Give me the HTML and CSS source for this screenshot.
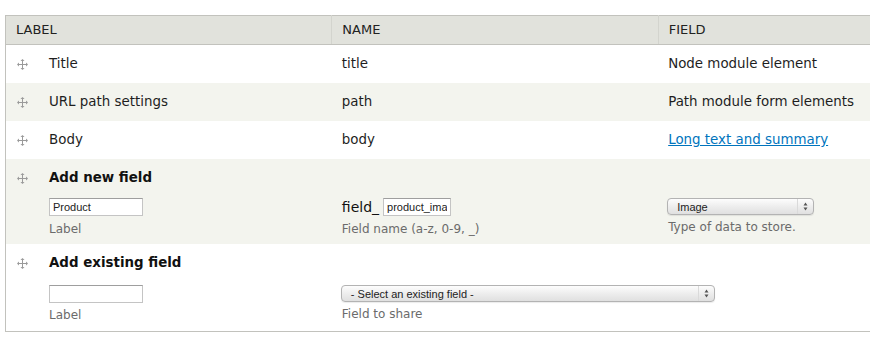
FILE: index.html
```html
<!DOCTYPE html>
<html lang="en">
<head>
    <meta charset="UTF-8">
    <title>Manage fields</title>
    <link rel="stylesheet" href="styles.css">
</head>
<body>
    <div class="page">
        <table class="field-table">
            <colgroup>
                <col class="col">
                <col class="col">
                <col class="col">
            </colgroup>
            <thead>
                <tr>
                    <th>LABEL</th>
                    <th>NAME</th>
                    <th>FIELD</th>
                </tr>
            </thead>
            <tbody>
                <tr>
                    <td><span class="handle"><svg width="11" height="11" viewBox="0 0 11 11"><path d="M5.5 1v9M1 5.5h9" stroke="#9a9a9a" stroke-width="1"/><path d="M5.5 0l2 2h-4zM5.5 11l2-2h-4zM0 5.5l2-2v4zM11 5.5l-2-2v4z" fill="#9a9a9a"/></svg></span>Title</td>
                    <td>title</td>
                    <td>Node module element</td>
                </tr>
                <tr class="even">
                    <td><span class="handle"><svg width="11" height="11" viewBox="0 0 11 11"><path d="M5.5 1v9M1 5.5h9" stroke="#9a9a9a" stroke-width="1"/><path d="M5.5 0l2 2h-4zM5.5 11l2-2h-4zM0 5.5l2-2v4zM11 5.5l-2-2v4z" fill="#9a9a9a"/></svg></span>URL path settings</td>
                    <td>path</td>
                    <td>Path module form elements</td>
                </tr>
                <tr>
                    <td><span class="handle"><svg width="11" height="11" viewBox="0 0 11 11"><path d="M5.5 1v9M1 5.5h9" stroke="#9a9a9a" stroke-width="1"/><path d="M5.5 0l2 2h-4zM5.5 11l2-2h-4zM0 5.5l2-2v4zM11 5.5l-2-2v4z" fill="#9a9a9a"/></svg></span>Body</td>
                    <td>body</td>
                    <td><a href="#" class="link">Long text and summary</a></td>
                </tr>
                <tr class="even add-row">
                    <td>
                        <div class="add-title"><span class="handle"><svg width="11" height="11" viewBox="0 0 11 11"><path d="M5.5 1v9M1 5.5h9" stroke="#9a9a9a" stroke-width="1"/><path d="M5.5 0l2 2h-4zM5.5 11l2-2h-4zM0 5.5l2-2v4zM11 5.5l-2-2v4z" fill="#9a9a9a"/></svg></span>Add new field</div>
                        <div class="form-item indent">
                            <input class="text-input" type="text" value="Product">
                            <div class="description">Label</div>
                        </div>
                    </td>
                    <td>
                        <div class="add-title">&nbsp;</div>
                        <div class="form-item">
                            <div class="prefix-line"><span class="prefix">field_</span><input class="text-input short" type="text" value="product_ima"></div>
                            <div class="description">Field name (a-z, 0-9, _)</div>
                        </div>
                    </td>
                    <td>
                        <div class="add-title">&nbsp;</div>
                        <div class="form-item">
                            <div class="select-box small"><span class="select-text">Image</span><span class="select-arrows"><svg width="5" height="9" viewBox="0 0 5 9"><path d="M2.5 0.5l2 3h-4zM2.5 8.5l2-3h-4z" fill="#555"/></svg></span></div>
                            <div class="description">Type of data to store.</div>
                        </div>
                    </td>
                </tr>
                <tr class="add-row last">
                    <td>
                        <div class="add-title"><span class="handle"><svg width="11" height="11" viewBox="0 0 11 11"><path d="M5.5 1v9M1 5.5h9" stroke="#9a9a9a" stroke-width="1"/><path d="M5.5 0l2 2h-4zM5.5 11l2-2h-4zM0 5.5l2-2v4zM11 5.5l-2-2v4z" fill="#9a9a9a"/></svg></span>Add existing field</div>
                        <div class="form-item indent">
                            <input class="text-input" type="text" value="">
                            <div class="description">Label</div>
                        </div>
                    </td>
                    <td>
                        <div class="add-title">&nbsp;</div>
                        <div class="form-item">
                            <div class="select-box wide"><span class="select-text">- Select an existing field -</span><span class="select-arrows"><svg width="5" height="9" viewBox="0 0 5 9"><path d="M2.5 0.5l2 3h-4zM2.5 8.5l2-3h-4z" fill="#555"/></svg></span></div>
                            <div class="description">Field to share</div>
                        </div>
                    </td>
                    <td></td>
                </tr>
            </tbody>
        </table>
    </div>
</body>
</html>
```

FILE: styles.css
```css
* {
    margin: 0;
    padding: 0;
    box-sizing: border-box;
}

body {
    font-family: "DejaVu Sans", Verdana, sans-serif;
    font-size: 13.4px;
    color: #333;
    background: #fff;
    overflow: hidden;
}

.page {
    padding: 15px 0 0 5px;
}

.field-table {
    border-collapse: collapse;
    table-layout: fixed;
    width: 980px;
    border: 1px solid #c2c2bd;
}

.col {
    width: 326px;
}

.field-table th {
    background-color: #e1e2dc;
    text-align: left;
    font-weight: normal;
    font-size: 13px;
    color: #222;
    padding: 5px 10px;
    line-height: 18px;
    border-bottom: 1px solid #c2c2bd;
    border-left: 1px solid #d3d4ce;
}

.field-table th:first-child {
    border-left: 0;
}

.field-table td {
    padding: 10px 10px;
    line-height: 18px;
    vertical-align: top;
    color: #1e1e1e;
}

.field-table tr.even td {
    background-color: #f3f4ee;
}

.handle {
    display: inline-block;
    width: 33px;
    padding-left: 1px;
    vertical-align: top;
    padding-top: 4px;
    line-height: 0;
}

.link {
    color: #0074bd;
}

.add-row td {
    padding: 10px 10px 7px;
}

.add-row.last td {
    padding: 10px 10px 8px;
}

.add-title {
    font-weight: bold;
    color: #111;
    line-height: 18px;
}

.form-item {
    margin-top: 11px;
}

.add-row.last .form-item {
    margin-top: 13px;
}

.indent {
    padding-left: 33px;
}

.text-input {
    display: block;
    width: 94px;
    height: 18px;
    border: 1px solid #c4c4c4;
    border-top-color: #9e9e9e;
    font-family: "Liberation Sans", Arial, sans-serif;
    font-size: 11px;
    color: #222;
    padding: 0 3px;
    background: #fff;
}

.prefix-line {
    display: flex;
    align-items: center;
    height: 18px;
}

.prefix {
    font-size: 14px;
    color: #111;
    margin-right: 4px;
}

.text-input.short {
    width: 68px;
}

.description {
    margin-top: 5px;
    font-size: 12px;
    line-height: 16px;
    color: #6b6b6b;
}

.add-row.last .description {
    margin-top: 4px;
}

.select-box {
    display: flex;
    align-items: center;
    height: 17px;
    border: 1px solid #b3b3b3;
    border-radius: 4px;
    background: linear-gradient(#fdfdfd, #ececec 55%, #e0e0e0);
    font-family: "Liberation Sans", Arial, sans-serif;
    font-size: 11px;
    color: #222;
    box-shadow: 0 1px 1px rgba(0,0,0,0.08);
}

.select-box.small {
    width: 147px;
    margin-left: -1px;
    margin-top: 1px;
    margin-bottom: -1px;
}

.select-box.wide {
    width: 374px;
    margin-left: -1px;
}

.select-text {
    flex: 1;
    padding-left: 9px;
    white-space: nowrap;
}

.select-arrows {
    width: 16px;
    height: 100%;
    display: flex;
    align-items: center;
    justify-content: center;
    border-left: 1px solid #dadada;
}
```
